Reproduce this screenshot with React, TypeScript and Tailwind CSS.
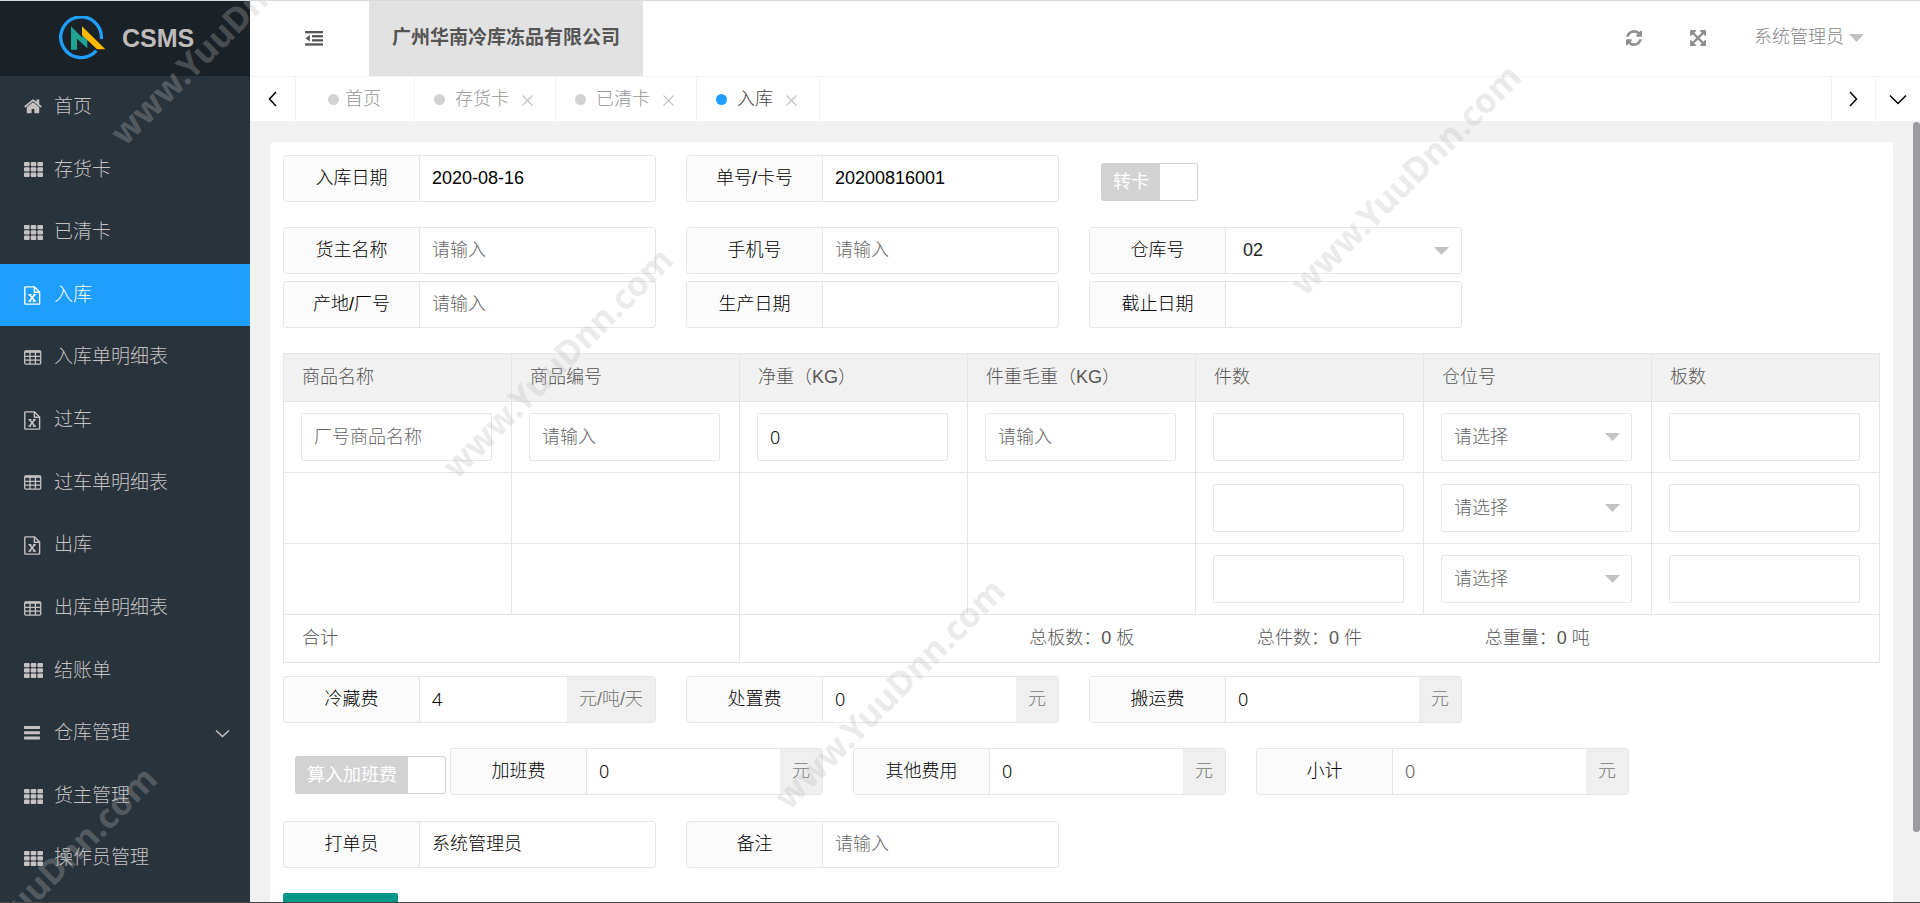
import React, { useState } from 'react';
import { clsx } from 'clsx';

type IconName = 'home' | 'grid' | 'excel' | 'table' | 'bars';

interface MenuItem {
  label: string;
  icon: IconName;
  hasChildren?: boolean;
}

const menuItems: MenuItem[] = [
  { label: '首页', icon: 'home' },
  { label: '存货卡', icon: 'grid' },
  { label: '已清卡', icon: 'grid' },
  { label: '入库', icon: 'excel' },
  { label: '入库单明细表', icon: 'table' },
  { label: '过车', icon: 'excel' },
  { label: '过车单明细表', icon: 'table' },
  { label: '出库', icon: 'excel' },
  { label: '出库单明细表', icon: 'table' },
  { label: '结账单', icon: 'grid' },
  { label: '仓库管理', icon: 'bars', hasChildren: true },
  { label: '货主管理', icon: 'grid' },
  { label: '操作员管理', icon: 'grid' },
];

const tabs = ['存货卡', '已清卡', '入库'];

const columns = ['商品名称', '商品编号', '净重（KG）', '件重毛重（KG）', '件数', '仓位号', '板数'];

const MenuIcon = ({ name }: { name: IconName }) => {
  switch (name) {
    case 'home':
      return (
        <svg width="18" height="18" viewBox="64 160 1664 1600" fill="currentColor">
          <path d="M1472 992v480q0 26-19 45t-45 19h-384v-384h-256v384h-384q-26 0-45-19t-19-45v-480q0-1 .5-3t.5-3l575-474 575 474q1 2 1 6zm223-69l-62 74q-8 9-21 11h-3q-13 0-21-7l-692-577-692 577q-12 8-24 7-13-2-21-11l-62-74q-8-10-7-23.5t11-21.5l719-599q32-26 76-26t76 26l244 204v-195q0-14 9-23t23-9h192q14 0 23 9t9 23v408l219 182q10 8 11 21.5t-7 23.5z" />
        </svg>
      );
    case 'grid':
      return (
        <svg width="19" height="15" viewBox="0 0 19 15" fill="currentColor">
          {[0, 5.3, 10.6].map((y) =>
            [0, 6.7, 13.4].map((x) => (
              <rect key={`${x}-${y}`} x={x} y={y} width="5.6" height="4.3" rx="1" />
            ))
          )}
        </svg>
      );
    case 'excel':
      return (
        <svg width="17" height="19" viewBox="0 0 17 19" fill="none" stroke="currentColor" strokeWidth="1.4">
          <path d="M1.5 .9h9L15.6 6v11.4a.7.7 0 0 1-.7.7H1.5a.7.7 0 0 1-.7-.7V1.6a.7.7 0 0 1 .7-.7z" />
          <path d="M10.4 1v5.2h5.2" />
          <path d="M5.6 8.7l5.2 6.4M10.6 8.7l-5 6.4" strokeWidth="1.6" />
          <path d="M4.4 8.6h3M9 8.6h2.8M4.3 15.2h2.9M8.8 15.2h3.2" strokeWidth="1.2" />
        </svg>
      );
    case 'table':
      return (
        <svg width="18" height="15" viewBox="0 0 18 15" fill="none" stroke="currentColor" strokeWidth="1.3">
          <rect x=".7" y=".9" width="16" height="13.2" rx="1" />
          <path d="M1 1.7h15.5" strokeWidth="2.2" />
          <path d="M1 6.3h15.5M1 10.1h15.5M6 2v12M11.4 2v12" />
        </svg>
      );
    case 'bars':
      return (
        <svg width="16" height="14" viewBox="0 0 16 14" fill="currentColor">
          <rect y="0" width="16" height="3" rx=".7" />
          <rect y="5.2" width="16" height="3" rx=".7" />
          <rect y="10.4" width="16" height="3" rx=".7" />
        </svg>
      );
  }
};

const Logo = () => (
  <svg width="47" height="45" viewBox="177 56 141 135">
    <path d="M304 125A61 61 0 1 0 289 160" fill="none" stroke="#1e9fff" strokeWidth="10" />
    <path d="M213 157V87l34 34v-8l15 15v25l-31-29v33z" fill="#1fa391" />
    <path d="M246 87l70 69h-25l-45-43z" fill="#ffb800" />
  </svg>
);

const Chevron = ({ d, width, height }: { d: string; width: number; height: number }) => (
  <svg width={width} height={height} viewBox={`0 0 ${width} ${height}`} fill="none" stroke="currentColor" strokeWidth="1.5">
    <path d={d} />
  </svg>
);

const Caret = () => (
  <svg width="15" height="8" viewBox="0 0 15 8" fill="#c2c2c2">
    <path d="M0 0h15L7.5 8z" />
  </svg>
);

const Sidebar = () => {
  const [active, setActive] = useState('入库');

  return (
    <aside className="flex w-[250px] shrink-0 flex-col bg-[#29333c] text-[#c6c2c2]">
      <div className="flex h-[75px] shrink-0 items-center gap-4 bg-[#1a2127] pl-[59px] text-[#bfbbbb]">
        <Logo />
        <span className="text-[25px] font-bold">CSMS</span>
      </div>
      <nav className="flex flex-1 flex-col pb-3">
        {menuItems.map((item) => (
          <a
            key={item.label}
            href="#"
            onClick={() => setActive(item.label)}
            className={clsx(
              'flex min-h-12 flex-1 items-center pl-6 pr-5 text-[19px] font-light',
              item.label === active && 'bg-[#1e9fff] text-white'
            )}
          >
            <span className="w-[30px]">
              <MenuIcon name={item.icon} />
            </span>
            <span className="flex-1">{item.label}</span>
            {item.hasChildren && <Chevron width={15} height={9} d="M1 1.5l6.5 6 6.5-6" />}
          </a>
        ))}
      </nav>
    </aside>
  );
};

const Header = () => (
  <header className="flex h-[75px] shrink-0 items-center bg-white">
    <button type="button" aria-label="收起菜单" className="flex w-[119px] items-center pl-[55px] text-[#555]">
      <svg width="18" height="15" viewBox="0 0 18 15" fill="currentColor">
        <rect y="0" width="18" height="2.3" />
        <rect x="7" y="4.1" width="11" height="2.3" />
        <rect x="7" y="8.2" width="11" height="2.3" />
        <rect y="12.3" width="18" height="2.3" />
        <path d="M4.8 4v6.6L.6 7.3z" />
      </svg>
    </button>
    <div className="flex h-full items-center bg-[#e2e2e2] px-[23px] text-[19px] font-bold text-[#555]">
      广州华南冷库冻品有限公司
    </div>
    <div className="ml-auto flex items-center gap-12 pr-14 pb-[2px] text-[#8f8f8f]">
      <button type="button" aria-label="刷新">
        <svg width="16" height="16" viewBox="0 0 1536 1536" fill="currentColor">
          <path d="M1511 928q0 5-1 7-64 268-268 434.5t-478 166.500q-146 0-282.500-55t-243.500-157l-129 129q-19 19-45 19t-45-19-19-45v-448q0-26 19-45t45-19h448q26 0 45 19t19 45-19 45l-137 137q71 66 161 102t187 36q134 0 250-65t186-179q11-17 53-117 8-23 30-23h192q13 0 22.500 9.500t9.500 22.500zm25-800v448q0 26-19 45t-45 19h-448q-26 0-45-19t-19-45 19-45l138-138q-148-137-349-137-134 0-250 65t-186 179q-11 17-53 117-8 23-30 23h-199q-13 0-22.500-9.500t-9.500-22.500v-7q65-268 270-434.500t480-166.500q146 0 284 55.500t245 156.500l130-129q19-19 45-19t45 19 19 45z" />
        </svg>
      </button>
      <button type="button" aria-label="全屏">
        <svg width="16" height="16" viewBox="128 128 1536 1536" fill="currentColor">
          <path d="M1411 541l-355 355 355 355 144-144q29-31 70-14 39 17 39 59v448q0 26-19 45t-45 19h-448q-42 0-59-40-17-39 14-69l144-144-355-355-355 355 144 144q31 30 14 69-17 40-59 40h-448q-26 0-45-19t-19-45v-448q0-42 40-59 39-17 69 14l144 144 355-355-355-355-144 144q-19 19-45 19-12 0-24-5-40-17-40-59v-448q0-26 19-45t45-19h448q42 0 59 40 17 39-14 69l-144 144 355 355 355-355-144-144q-31-30-14-69 17-40 59-40h448q26 0 45 19t19 45v448q0 42-39 59-13 5-25 5-26 0-45-19z" />
        </svg>
      </button>
      <button type="button" className="flex items-center gap-[5px] font-light text-[#858585]">
        系统管理员
        <Caret />
      </button>
    </div>
  </header>
);

const TabBar = () => {
  const [current, setCurrent] = useState('入库');

  return (
    <div className="flex h-[45px] shrink-0 border-t border-[#f4f4f4] bg-white font-light text-[#959595]">
      <button type="button" aria-label="向左" className="flex w-[46px] items-center justify-center border-r border-[#f4f4f4] text-black">
        <Chevron width={9} height={16} d="M8 1L1.5 8 8 15" />
      </button>
      <button type="button" onClick={() => setCurrent('首页')} className="flex items-center gap-[6px] border-r border-[#f4f4f4] pl-8 pr-[33px]">
        <i className={clsx('size-[11px] rounded-full', current === '首页' ? 'bg-[#1e9fff]' : 'bg-[#d2d2d2]')} />
        首页
      </button>
      {tabs.map((tab) => (
        <div key={tab} className="flex items-center gap-[13px] border-r border-[#f4f4f4] pl-[19px] pr-[22px]">
          <button
            type="button"
            onClick={() => setCurrent(tab)}
            className={clsx('flex items-center gap-[10px]', tab === current && 'text-[#444]')}
          >
            <i className={clsx('size-[11px] rounded-full', tab === current ? 'bg-[#1e9fff]' : 'bg-[#d2d2d2]')} />
            {tab}
          </button>
          <button type="button" aria-label={`关闭${tab}`} className="pt-[3px] text-[#c2c2c2]">
            <svg width="11" height="11" viewBox="0 0 11 11" stroke="currentColor" strokeWidth="1.1">
              <path d="M.5 .5l10 10M10.5 .5l-10 10" />
            </svg>
          </button>
        </div>
      ))}
      <div className="ml-auto flex text-black">
        <button type="button" aria-label="向右" className="flex w-11 items-center justify-center border-l border-[#f4f4f4]">
          <Chevron width={9} height={16} d="M1 1l6.5 7L1 15" />
        </button>
        <button type="button" aria-label="更多" className="flex w-[45px] items-center justify-center border-l border-[#f4f4f4]">
          <Chevron width={18} height={11} d="M1 1.5l8 8 8-8" />
        </button>
      </div>
    </div>
  );
};

interface FieldProps {
  id: string;
  label: string;
  value?: string;
  placeholder?: string;
  suffix?: string;
  readOnly?: boolean;
  options?: string[];
}

const Field: React.FC<FieldProps> = ({ id, label, value, placeholder, suffix, readOnly, options }) => (
  <div className="flex h-[47px] w-[373px] overflow-hidden rounded-[3px] border border-[#e6e6e6] bg-white">
    <label
      htmlFor={id}
      className="flex w-[136px] shrink-0 items-center justify-center border-r border-[#e6e6e6] bg-[#fbfbfb] font-light text-black"
    >
      {label}
    </label>
    {options ? (
      <div className="relative flex min-w-0 flex-1">
        <select id={id} className="w-full appearance-none px-[17px] text-[#222] outline-none">
          {options.map((option) => (
            <option key={option}>{option}</option>
          ))}
        </select>
        <span className="pointer-events-none absolute inset-y-0 right-3 flex items-center">
          <Caret />
        </span>
      </div>
    ) : (
      <input
        id={id}
        defaultValue={value}
        placeholder={placeholder}
        readOnly={readOnly}
        className={clsx(
          'min-w-0 flex-1 px-3 font-light outline-none placeholder:text-[#666]',
          readOnly ? 'text-[#555]' : 'text-black',
          suffix && "font-['Noto_Sans','Noto_Sans_CJK_SC',sans-serif]"
        )}
      />
    )}
    {suffix && (
      <span className="flex items-center bg-[#efefef] px-3 font-light text-[#777]">{suffix}</span>
    )}
  </div>
);

const Toggle = ({ label }: { label: string }) => (
  <label className="mt-2 flex h-[38px] items-center rounded-[3px] bg-[#d2d2d2] p-px text-white">
    <span className="px-[11px]">{label}</span>
    <input type="checkbox" role="switch" className="h-full w-[37px] appearance-none rounded-r-[2px] bg-white" />
  </label>
);

const cellInput =
  'block h-12 w-full rounded-[2px] border border-[#e6e6e6] bg-white px-3 font-light outline-none placeholder:text-[#666]';

const CellInput = ({ label, value, placeholder }: { label: string; value?: string; placeholder?: string }) => (
  <input
    aria-label={label}
    defaultValue={value}
    placeholder={placeholder}
    className={clsx(cellInput, 'text-black', value && "font-['Noto_Sans',sans-serif]")}
  />
);

const GoodsTable = () => (
  <table className="w-full table-fixed border-collapse font-light text-[#555]">
    <thead>
      <tr className="h-12 bg-[#f1f1f1]">
        {columns.map((column) => (
          <th key={column} className="border border-[#e6e6e6] px-[18px] text-left font-light">
            {column}
          </th>
        ))}
      </tr>
    </thead>
    <tbody>
      {[0, 1, 2].map((row) => (
        <tr key={row} className="h-[71px] *:border *:border-[#e6e6e6] *:pl-[17px] *:pr-[19px]">
          <td>{row === 0 && <CellInput label="商品名称" placeholder="厂号商品名称" />}</td>
          <td>{row === 0 && <CellInput label="商品编号" placeholder="请输入" />}</td>
          <td>{row === 0 && <CellInput label="净重" value="0" />}</td>
          <td>{row === 0 && <CellInput label="件重毛重" placeholder="请输入" />}</td>
          <td>
            <CellInput label="件数" />
          </td>
          <td>
            <div className="relative">
              <select aria-label="仓位号" className={clsx(cellInput, 'appearance-none text-[#666]')}>
                <option>请选择</option>
              </select>
              <span className="pointer-events-none absolute inset-y-0 right-3 flex items-center">
                <Caret />
              </span>
            </div>
          </td>
          <td>
            <CellInput label="板数" />
          </td>
        </tr>
      ))}
      <tr className="h-12">
        <td colSpan={2} className="border border-[#e6e6e6] px-[18px]">
          合计
        </td>
        <td colSpan={5} className="border border-[#e6e6e6]">
          <div className="grid grid-cols-5 text-center">
            <span className="col-start-2">总板数：0 板</span>
            <span>总件数：0 件</span>
            <span>总重量：0 吨</span>
          </div>
        </td>
      </tr>
    </tbody>
  </table>
);

const StockInForm = () => (
  <form className="m-5 mt-[21px] rounded-[4px] bg-white p-[13px]">
    <div className="mb-[25px] flex flex-wrap gap-x-[30px]">
      <Field id="date" label="入库日期" value="2020-08-16" />
      <Field id="cardNo" label="单号/卡号" value="20200816001" />
      <div className="pl-3">
        <Toggle label="转卡" />
      </div>
    </div>
    <div className="mb-[7px] flex flex-wrap gap-x-[30px]">
      <Field id="owner" label="货主名称" placeholder="请输入" />
      <Field id="phone" label="手机号" placeholder="请输入" />
      <Field id="warehouse" label="仓库号" options={['02']} />
    </div>
    <div className="mb-[25px] flex flex-wrap gap-x-[30px]">
      <Field id="origin" label="产地/厂号" placeholder="请输入" />
      <Field id="produced" label="生产日期" />
      <Field id="deadline" label="截止日期" />
    </div>

    <GoodsTable />

    <div className="mb-[25px] mt-[13px] flex flex-wrap gap-x-[30px]">
      <Field id="coldFee" label="冷藏费" value="4" suffix="元/吨/天" />
      <Field id="handleFee" label="处置费" value="0" suffix="元" />
      <Field id="carryFee" label="搬运费" value="0" suffix="元" />
    </div>
    <div className="mb-[26px] flex flex-wrap gap-x-[30px]">
      <div className="flex gap-1 pl-3">
        <Toggle label="算入加班费" />
        <Field id="overtimeFee" label="加班费" value="0" suffix="元" />
      </div>
      <Field id="otherFee" label="其他费用" value="0" suffix="元" />
      <Field id="subtotal" label="小计" value="0" suffix="元" readOnly />
    </div>
    <div className="mb-[25px] flex flex-wrap gap-x-[30px]">
      <Field id="operator" label="打单员" value="系统管理员" />
      <Field id="remark" label="备注" placeholder="请输入" />
    </div>
    <button type="submit" className="h-12 w-[115px] rounded-[2px] bg-[#009688] text-white">
      提交
    </button>
  </form>
);

// Diagonal site mark repeated over the whole page
const watermarkSpots = [
  'left-[225px] top-[28px]',
  'left-[557px] top-[361px]',
  'left-[889px] top-[692px]',
  'left-[1405px] top-[178px]',
  'left-[41px] top-[880px]',
];

const Watermark = () => (
  <div aria-hidden="true" className="pointer-events-none absolute inset-0 overflow-hidden">
    {watermarkSpots.map((spot) => (
      <span
        key={spot}
        className={clsx(
          "absolute -translate-x-1/2 -translate-y-1/2 -rotate-45 font-['Noto_Sans',sans-serif] text-[34px] leading-none font-bold text-[#bbbbbb]/30",
          spot
        )}
      >
        www.YuuDnn.com
      </span>
    ))}
  </div>
);

export default function App() {
  return (
    <div className="relative flex h-screen overflow-hidden border-t border-b border-t-[#d9d9de] border-b-[#444] bg-[#f1f1f1] font-['Liberation_Sans','Noto_Sans_CJK_SC',sans-serif] text-[18px]">
      <Sidebar />
      <div className="flex min-w-0 flex-1 flex-col">
        <Header />
        <TabBar />
        <main className="flex min-h-0 flex-1">
          <div className="min-w-0 flex-1 overflow-hidden">
            <StockInForm />
          </div>
          <div className="w-[7px] pt-px">
            <div className="h-[91%] rounded-full bg-[#9b9ca0]" />
          </div>
        </main>
      </div>
      <Watermark />
    </div>
  );
}
